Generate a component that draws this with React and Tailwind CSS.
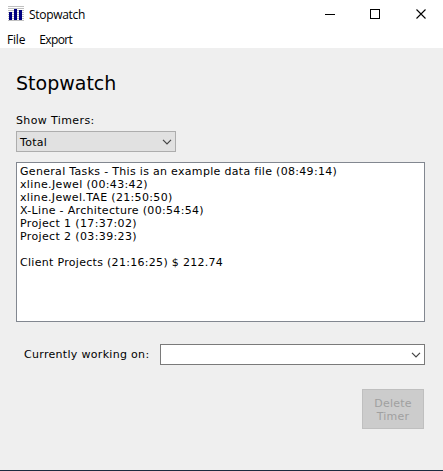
const ui = "font-['DejaVu_Sans',sans-serif] text-[11px] leading-[13px] tracking-[0.31px]";

const timers = [
  { text: 'General Tasks - This is an example data file (08:49:14)', fit: 'tracking-[0.31px]' },
  { text: 'xline.Jewel (00:43:42)', fit: 'tracking-[0.35px]' },
  { text: 'xline.Jewel.TAE (21:50:50)', fit: 'tracking-[0.33px]' },
  { text: 'X-Line - Architecture (00:54:54)', fit: 'tracking-[0.32px]' },
  { text: 'Project 1 (17:37:02)', fit: 'tracking-[0.37px]' },
  { text: 'Project 2 (03:39:23)', fit: 'tracking-[0.37px]' },
  { text: '', fit: '' },
  { text: 'Client Projects (21:16:25) $ 212.74', fit: 'tracking-[0.3px]' },
];

function AppIcon() {
  return (
    <svg className="h-4 w-4" viewBox="0 0 16 16" shapeRendering="crispEdges">
      <path d="M0 .5h16M0 2.5h16M0 4.5h16M0 6.5h16M0 8.5h16M0 10.5h16M0 12.5h16M0 14.5h16" stroke="#c0c0c0" />
      <path d="M1 6h3v8H1zM6 3h3v11H6zM11 4h3v10h-3z" fill="#000080" />
    </svg>
  );
}

function Chevron() {
  return (
    <svg className="h-[6px] w-[10px]" viewBox="0 0 10 6" fill="none" stroke="#444" strokeWidth="1.2">
      <path d="M1 .8l4 4 4-4" />
    </svg>
  );
}

function TitleBar() {
  return (
    <header className="flex h-7 items-center pl-2">
      <AppIcon />
      <h1 className="ml-[5px] flex-1 pt-px font-['Open_Sans',sans-serif] text-[12px] leading-4 tracking-[-0.3px]">Stopwatch</h1>
      <svg className="mr-[14px] h-3 w-[109px]" viewBox="0 0 109 12" fill="none" stroke="#000">
        <path d="M5 6.5h10M50.5 1.5h9v9h-9z" shapeRendering="crispEdges" />
        <path d="M96.5 1.5l9 9M105.5 1.5l-9 9" strokeWidth="1.1" />
      </svg>
    </header>
  );
}

export default function App() {
  return (
    <div className="flex h-[471px] w-[443px] flex-col overflow-hidden border-b border-[#1b2b3f] bg-white text-black">
      <TitleBar />
      <nav className="flex h-5 shrink-0 gap-[14px] pl-[7px] pt-1 font-['Open_Sans',sans-serif] text-[12px] leading-4">
        <span className="tracking-[-0.2px]">File</span>
        <span className="tracking-[-0.6px]">Export</span>
      </nav>
      <main className={`flex flex-1 flex-col bg-[#efefef] pl-4 pr-[18px] ${ui}`}>
        <h2 className="mt-[23px] text-[19px] leading-6 tracking-[0px]">Stopwatch</h2>
        <label className="mt-[19px] tracking-[0.38px]">Show Timers:</label>
        <div className="mt-1 flex h-[21px] w-[160px] items-center justify-between border border-[#adadad] bg-[#e1e1e1] pl-[3px] pr-[3px]">
          <span className="pt-px">Total</span>
          <Chevron />
        </div>
        <ul className="mt-[10px] h-[160px] border border-[#828790] bg-white pl-[3px] pt-[2px]">
          {timers.map((t, i) => (
            <li key={i} className={`h-[13px] whitespace-nowrap ${t.fit}`}>{t.text}</li>
          ))}
        </ul>
        <div className="mt-[22px] flex items-center pl-2">
          <label className="w-[136px] whitespace-nowrap">Currently working on:</label>
          <div className="flex h-[21px] flex-1 items-center justify-end border border-[#7a7a7a] bg-white pr-[3px]">
            <Chevron />
          </div>
        </div>
        <button className="mr-px mt-6 flex h-10 w-[62px] items-center justify-center self-end border border-[#bfbfbf] bg-[#cccccc] text-center tracking-[0.2px] text-[#a0a0a0]">
          <span className="pt-px">Delete<br />Timer</span>
        </button>
      </main>
    </div>
  );
}
